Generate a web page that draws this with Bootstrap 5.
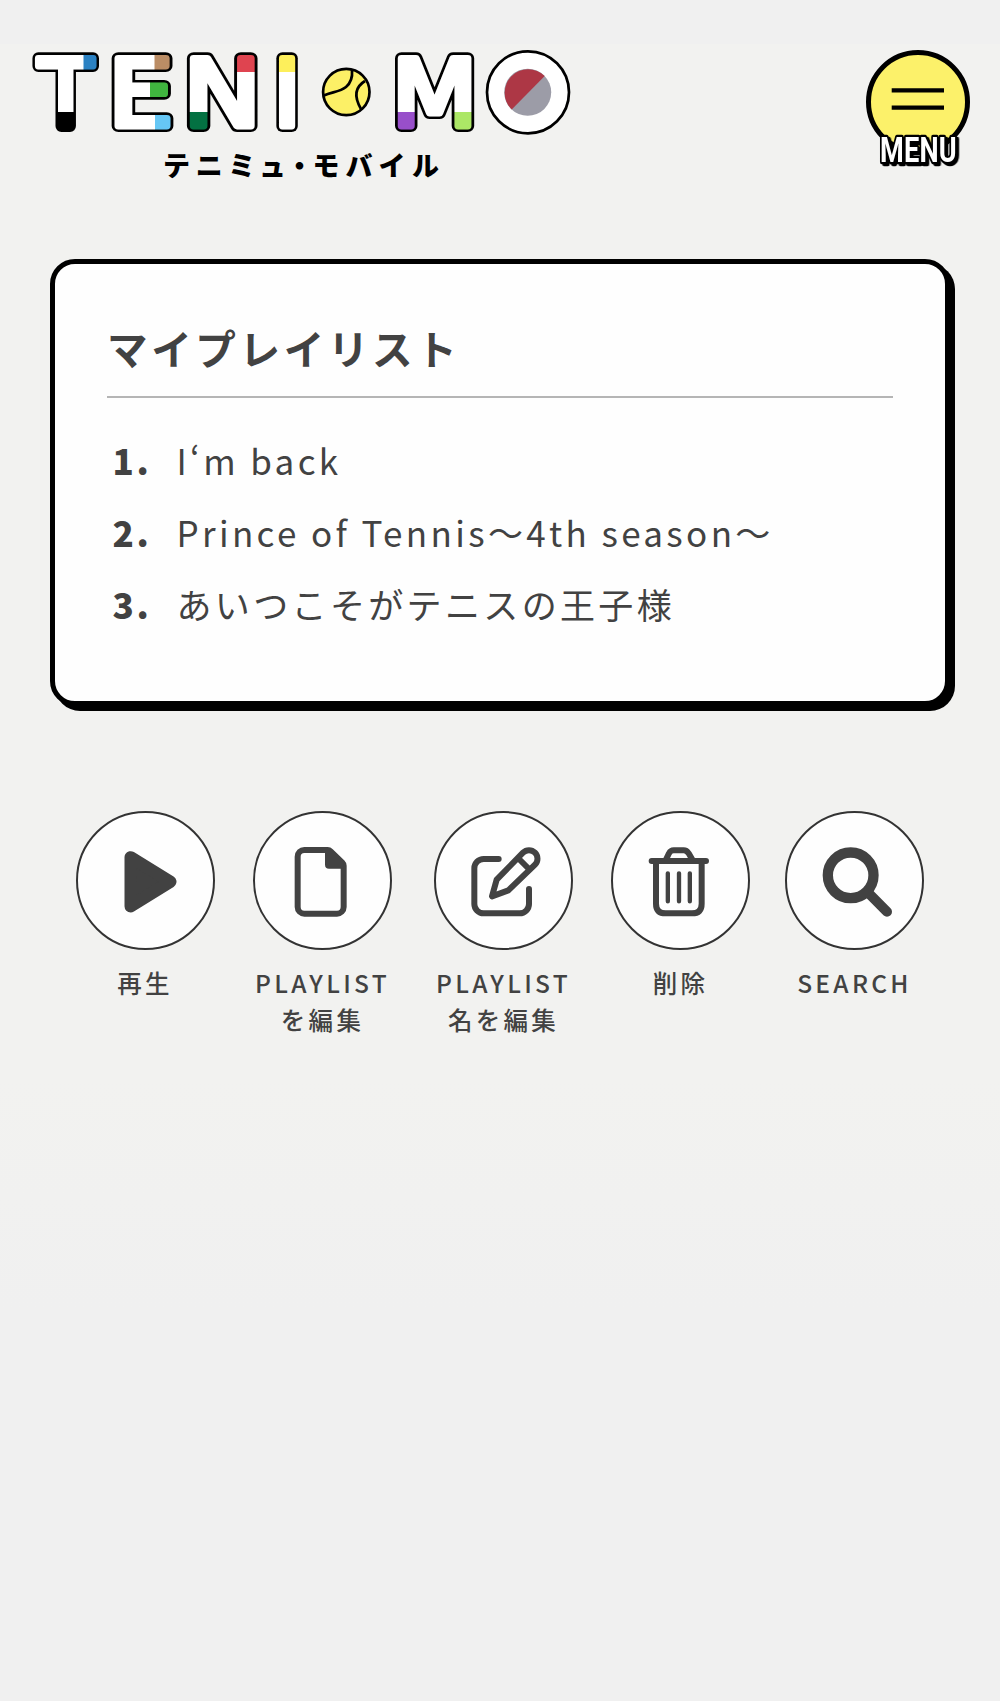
<!DOCTYPE html>
<html lang="ja">
<head>
<meta charset="utf-8">
<meta name="viewport" content="width=device-width, initial-scale=1">
<title>マイプレイリスト</title>
<link href="https://cdn.jsdelivr.net/npm/bootstrap@5.3.0/dist/css/bootstrap.min.css" rel="stylesheet">
<style>
  body { background: linear-gradient(#f0f0f0 0 44px, #f2f2f0 44px 1080px, #f0f0f0 1310px); min-height: 1701px; color: #424242; font-family: "Noto Sans CJK JP", sans-serif; }
  .site-head { padding: 46px 26px 0 30px; height: 258.500px; }
  .menu-btn { line-height: 0; }
  .menu-btn svg { overflow: visible; }
  .menu-word { filter: drop-shadow(3px 2.500px 0 #000); }
  .playlist-card { margin: 0 50px; height: 447px; border: 5px solid #000; border-radius: 25px; box-shadow: 5px 5px 0 #000; padding: 57px 52px 0; background: #fefefe; }
  .playlist-title { font-size: 40.600px; line-height: 54px; letter-spacing: 3.600px; font-weight: 700; padding-bottom: 21px; border-bottom: 2px solid #b5b5b5; margin-bottom: 26px; }
  .track { font-size: 35px; line-height: 72.200px; letter-spacing: 3.350px; }
  .track-no { width: 69.500px; padding-left: 5.500px; font-weight: 900; letter-spacing: 2.800px; }
  .actions { padding: 105px 0 0 75.500px; }
  .act { width: 139px; color: #424242; }
  .act-b { margin-left: 38.500px; } .act-c { margin-left: 42px; } .act-d { margin-left: 38px; } .act-e { margin-left: 35px; }
  .act-disc { width: 139px; height: 139px; border: 2px solid #333; background: #fefefe; }
  .act-disc svg { display: block; margin: -2px; }
  .act-label { font-size: 24.500px; line-height: 37px; letter-spacing: 3.300px; font-weight: 500; margin-top: 14px; white-space: nowrap; }
  .ln { fill: none; stroke: #424242; stroke-width: 18; stroke-linecap: round; stroke-linejoin: round; }
</style>
</head>
<body>
<header class="site-head d-flex justify-content-between align-items-start">
  <a href="#" class="lh-1">
  <svg class="d-block" width="546" height="140" viewBox="30 46 546 140" role="img" aria-label="TENI・MO テニミュ・モバイル">
    <defs>
      <g id="word" font-family="DejaVu Sans" font-size="91.9" stroke-linejoin="round">
        <text transform="translate(38.4 125.7) scale(.97 1)">T</text>
        <text transform="translate(108.3 125.7) scale(1.12 1)">E</text>
        <text transform="translate(183.6 125.7) scale(1.127 1)">N</text>
        <text transform="translate(273.2 125.7) scale(1.02 1)">I</text>
        <text transform="translate(391.7 125.7) scale(1.08 1)">M</text>
      </g>
      <mask id="inner" maskUnits="userSpaceOnUse" x="30" y="46" width="546" height="140">
        <use href="#word" fill="#fff" stroke="#fff" stroke-width="6.8"/>
      </mask>
    </defs>
    <use href="#word" fill="#000" stroke="#000" stroke-width="12"/>
    <g mask="url(#inner)">
      <rect x="30" y="46" width="546" height="90" fill="#fff"/>
      <rect x="83.500" y="50" width="20" height="23" fill="#2b82c3"/>
      <rect x="50" y="112" width="30" height="24" fill="#000"/>
      <rect x="154.500" y="50" width="22" height="22" fill="#bb8d65"/>
      <rect x="150" y="80" width="20" height="24" fill="#40b53f"/>
      <rect x="155" y="110" width="22" height="24" fill="#66c7f5"/>
      <rect x="184" y="112" width="24" height="24" fill="#037142"/>
      <rect x="237" y="50" width="22" height="22" fill="#df4450"/>
      <rect x="274" y="50" width="26" height="22" fill="#fdef5b"/>
      <rect x="393" y="112" width="24" height="24" fill="#984fca"/>
      <rect x="452" y="112" width="24" height="24" fill="#ace766"/>
    </g>
    <g fill="none" stroke="#000" stroke-width="2.700">
      <circle cx="346.300" cy="92" r="23.200" fill="#fcf066"/>
      <path d="M324 95.500C331 92 340 92 346 87Q353 81 352 70M365 81Q350 90 361 109"/>
      <circle cx="528" cy="92.300" r="41" fill="#fff"/>
    </g>
    <circle cx="527.700" cy="92.300" r="23.500" fill="#9c9ca7"/>
    <path d="M511.700 109.500A23.500 23.500 0 1 1 544.700 76Z" fill="#ad3745"/>
    <g font-family="'Noto Sans CJK JP', sans-serif" font-weight="900" font-size="27" text-anchor="middle">
      <text y="176" x="176.600 209.300 241.700 272.500 299.500 326 359 392 425.500">テニミュ・モバイル</text>
    </g>
  </svg>
  </a>
  <button class="menu-btn btn p-0 border-0" type="button" aria-label="MENU">
    <svg width="112" height="144" viewBox="862 46 112 144">
      <circle cx="918" cy="102" r="49.500" fill="#fcf16a" stroke="#000" stroke-width="5"/>
      <path d="M891.700 90.300h52.300M891.700 107.700h52.300" stroke="#000" stroke-width="4.300"/>
      <text class="menu-word" transform="translate(880 161.500) scale(.775 1)" font-family="Roboto, sans-serif" font-weight="700" font-size="35" letter-spacing=".3" fill="#fff" stroke="#000" stroke-width="4.500" stroke-linejoin="round" paint-order="stroke">MENU</text>
    </svg>
  </button>
</header>
<main>
  <section class="playlist-card">
    <h1 class="playlist-title">マイプレイリスト</h1>
    <ol class="list-unstyled mb-0">
      <li class="track d-flex"><span class="track-no">1.</span><span>I‘m back</span></li>
      <li class="track d-flex"><span class="track-no">2.</span><span>Prince of Tennis～4th season～</span></li>
      <li class="track d-flex"><span class="track-no">3.</span><span>あいつこそがテニスの王子様</span></li>
    </ol>
  </section>
  <nav class="actions d-flex align-items-start text-center">
    <a href="#" class="act text-decoration-none">
      <div class="act-disc rounded-circle"><svg width="139" height="139" viewBox="46 32 417 417"><path class="ln" d="M210 171V318L329 244Z" style="fill:#424242;stroke-width:37"/></svg></div>
      <div class="act-label">再生</div>
    </a>
    <a href="#" class="act act-b text-decoration-none">
      <div class="act-disc rounded-circle"><svg width="139" height="139" viewBox="579 32 417 417"><path class="ln" d="M733 149H803Q808 149 812 153L847 187Q851 191 851 196V320a20 20 0 0 1-20 20H733a20 20 0 0 1-20-20V169a20 20 0 0 1 20-20Z"/><path fill="#424242" d="M795 149V193q0 12 12 12H851V190L810 149Z"/></svg></div>
      <div class="act-label">PLAYLIST<br>を編集</div>
    </a>
    <a href="#" class="act act-c text-decoration-none">
      <div class="act-disc rounded-circle"><svg width="139" height="139" viewBox="41 32 417 417"><path class="ln" d="M235 176H190a28 28 0 0 0-28 28V311a28 28 0 0 0 28 28H298a28 28 0 0 0 28-28V266M215 288L229 238L308 157A25 25 0 0 1 344 193L264 270ZM296 176L326 206"/></svg></div>
      <div class="act-label">PLAYLIST<br>名を編集</div>
    </a>
    <a href="#" class="act act-d text-decoration-none">
      <div class="act-disc rounded-circle"><svg width="139" height="139" viewBox="573 32 417 417"><path class="ln" d="M695 182H858M737 180L747 159Q752 150 761 150H791Q800 150 806 159L818 180M708 185V310q0 29 29 29H816q29 0 29-29V185"/><path class="ln" d="M743.500 219V303M777 219V303M809.500 219V303" style="stroke-width:13"/></svg></div>
      <div class="act-label">削除</div>
    </a>
    <a href="#" class="act act-e text-decoration-none">
      <div class="act-disc rounded-circle"><svg width="139" height="139" viewBox="256 32 417 417"><path class="ln" d="M510 282L562 334" style="stroke-width:30"/><circle class="ln" cx="453" cy="225" r="68.500" style="stroke-width:31"/></svg></div>
      <div class="act-label">SEARCH</div>
    </a>
  </nav>
</main>
<script src="https://cdn.jsdelivr.net/npm/bootstrap@5.3.0/dist/js/bootstrap.bundle.min.js"></script>
</body>
</html>
